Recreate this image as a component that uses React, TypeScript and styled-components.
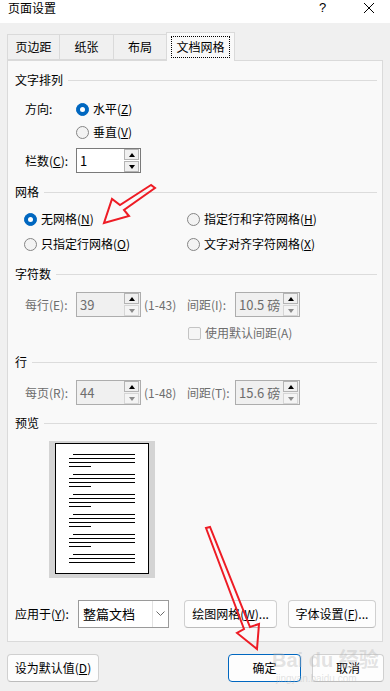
import React from "react";
import styled, { createGlobalStyle } from "styled-components";

const GlobalStyle = createGlobalStyle`
  html, body {
    margin: 0;
    padding: 0;
    background: #f0f0f0;
  }
  body {
    font-family: "Noto Sans CJK SC", "Noto Sans", "Liberation Sans", sans-serif;
    font-size: 12px;
    line-height: 16px;
    color: #000;
  }
  u {
    text-underline-offset: 1px;
  }
`;

const Window = styled.div`
  position: relative;
  width: 390px;
  height: 691px;
  background: #f0f0f0;
  overflow: hidden;
  display: flex;
  flex-direction: column;
`;

const TitleBar = styled.div`
  height: 23px;
  background: #fff;
  display: flex;
  align-items: flex-start;
  padding-left: 8px;
`;

const Title = styled.span`
  flex: 1;
  line-height: 15px;
`;

const Help = styled.span`
  width: 12px;
  margin-right: 32px;
  font-size: 13px;
  line-height: 15px;
  font-family: "Liberation Sans", sans-serif;
`;

const Close = styled.svg`
  margin: 2px 15px 0 0;
`;

const TabRow = styled.div`
  margin: 9px 0 0 7px;
  height: 28px;
  display: flex;
  align-items: flex-end;
  position: relative;
  z-index: 1;
`;

const Tab = styled.div<{ $w: number; $active?: boolean }>`
  box-sizing: border-box;
  width: ${(p) => p.$w}px;
  height: ${(p) => (p.$active ? 29 : 26)}px;
  margin-right: -1px;
  margin-bottom: ${(p) => (p.$active ? -1 : 0)}px;
  border: 1px solid #dadada;
  border-bottom: ${(p) => (p.$active ? "none" : "1px solid #dadada")};
  background: ${(p) => (p.$active ? "#f9f9f9" : "#f0f0f0")};
  display: flex;
  align-items: center;
  justify-content: center;
`;

const FocusText = styled.span`
  padding: 2px 4px;
  outline: 1px dotted #000;
  margin-top: -1px;
`;

const Panel = styled.div`
  box-sizing: border-box;
  margin: 0 7px;
  height: 582px;
  border: 1px solid #dadada;
  background: #f9f9f9;
  padding: 10px 5px 0 7px;
  display: flex;
  flex-direction: column;
`;

const Header = styled.div<{ $mt?: number }>`
  height: 18px;
  margin-top: ${(p) => p.$mt ?? 0}px;
  display: flex;
  align-items: center;
`;

const HeaderLine = styled.div`
  flex: 1;
  height: 1px;
  background: #dcdcdc;
  margin-left: 5px;
`;

const Row = styled.div<{ $mt: number; $h: number; $pl?: number }>`
  height: ${(p) => p.$h}px;
  margin-top: ${(p) => p.$mt}px;
  padding-left: ${(p) => p.$pl ?? 10}px;
  display: flex;
  align-items: center;
`;

const Label = styled.span<{ $w: number; $muted?: boolean }>`
  width: ${(p) => p.$w}px;
  flex: none;
  white-space: nowrap;
  color: ${(p) => (p.$muted ? "#6d6d6d" : "#000")};
`;

const Muted = styled.span`
  color: #6d6d6d;
  white-space: nowrap;
`;

const RadioItem = styled.label<{ $w?: number }>`
  display: flex;
  align-items: center;
  gap: 4px;
  width: ${(p) => (p.$w ? `${p.$w}px` : "auto")};
  flex: none;
  white-space: nowrap;
`;

const RadioCircle = styled.span<{ $checked?: boolean }>`
  box-sizing: border-box;
  width: 13px;
  height: 13px;
  flex: none;
  border-radius: 50%;
  border: 1px solid ${(p) => (p.$checked ? "#0067c0" : "#858585")};
  background: ${(p) => (p.$checked ? "#0067c0" : "#f3f3f3")};
  display: flex;
  align-items: center;
  justify-content: center;
  &::after {
    content: "";
    display: ${(p) => (p.$checked ? "block" : "none")};
    width: 5px;
    height: 5px;
    border-radius: 50%;
    background: #fff;
  }
`;

const CheckBox = styled.span`
  box-sizing: border-box;
  width: 13px;
  height: 13px;
  flex: none;
  border-radius: 2px;
  border: 1px solid #c4c4c4;
  background: #f5f5f5;
`;

const SpinBox = styled.div<{ $disabled?: boolean }>`
  box-sizing: border-box;
  width: 65px;
  height: 25px;
  flex: none;
  border: 1px solid ${(p) => (p.$disabled ? "#adadad" : "#7a7a7a")};
  background: ${(p) => (p.$disabled ? "#f0f0f0" : "#fff")};
  display: flex;
  align-items: stretch;
  padding: 0 1px 0 3px;
`;

const SpinValue = styled.span<{ $disabled?: boolean }>`
  flex: 1;
  display: flex;
  align-items: center;
  font-size: 13px;
  color: ${(p) => (p.$disabled ? "#6d6d6d" : "#000")};
`;

const SpinButtons = styled.div`
  width: 15px;
  display: flex;
  flex-direction: column;
  justify-content: center;
  gap: 1px;
`;

const SpinBtn = styled.div<{ $down?: boolean; $dim?: boolean }>`
  box-sizing: border-box;
  height: 11px;
  border: 1px solid ${(p) => (p.$dim ? "#d6d6d6" : "#b4b4b4")};
  background: ${(p) => (p.$dim ? "#f4f4f4" : "#f0f0f0")};
  display: flex;
  align-items: center;
  justify-content: center;
  &::after {
    content: "";
    width: 0;
    height: 0;
    border-left: 3.5px solid transparent;
    border-right: 3.5px solid transparent;
    ${(p) =>
      p.$down
        ? `border-top: 4px solid ${p.$dim ? "#8a8a8a" : "#000"};`
        : `border-bottom: 4px solid #000;`}
  }
`;

const Range = styled.span`
  width: 43px;
  margin-left: 3px;
  color: #6d6d6d;
  white-space: nowrap;
`;

const PreviewFrame = styled.div`
  box-sizing: border-box;
  margin: 9px 0 0 34px;
  width: 106px;
  height: 137px;
  background: #d4d4d4;
  padding: 2px 0 0 6px;
`;

const Page = styled.div`
  box-sizing: border-box;
  width: 94px;
  height: 131px;
  background: #fff;
  border: 1px solid #000;
  padding-top: 10px;
  display: flex;
  flex-direction: column;
  gap: 7px;
`;

const Para = styled.div`
  display: flex;
  flex-direction: column;
  gap: 3px;
`;

const TextLine = styled.div<{ $x: number; $w: number }>`
  height: 1px;
  margin-left: ${(p) => p.$x}px;
  width: ${(p) => p.$w}px;
  background: #000;
`;

const Select = styled.div`
  box-sizing: border-box;
  width: 91px;
  height: 28px;
  flex: none;
  border: 1px solid #9a9a9a;
  background: #fff;
  display: flex;
`;

const SelectText = styled.span`
  flex: 1;
  display: flex;
  align-items: center;
  padding-left: 4px;
  font-size: 13px;
`;

const SelectArrow = styled.span`
  width: 15px;
  border-left: 1px solid #e2e2e2;
  display: flex;
  align-items: center;
  justify-content: center;
`;

const Button = styled.div<{ $w: number; $ml?: number; $primary?: boolean }>`
  box-sizing: border-box;
  width: ${(p) => p.$w}px;
  height: 28px;
  margin-left: ${(p) => p.$ml ?? 0}px;
  flex: none;
  border-radius: 4px;
  border: 1px solid ${(p) => (p.$primary ? "#0067c0" : "#d0d0d0")};
  border-bottom-color: ${(p) => (p.$primary ? "#0067c0" : "#bcbcbc")};
  background: #fdfdfd;
  display: flex;
  align-items: center;
  justify-content: center;
  white-space: nowrap;
`;

const Footer = styled.div`
  margin-top: 12px;
  padding: 0 6px 0 7px;
  display: flex;
`;

const Spacer = styled.div`
  flex: 1;
`;

const Overlay = styled.svg`
  position: absolute;
  left: 0;
  top: 0;
  pointer-events: none;
`;

const Watermark = styled.div`
  position: absolute;
  left: 272px;
  top: 648px;
  color: rgba(185, 185, 185, 0.4);
  font-family: "Liberation Sans", "Noto Sans CJK SC", sans-serif;
  pointer-events: none;
  display: flex;
  flex-direction: column;
  white-space: nowrap;
`;

const WmTop = styled.span`
  font-size: 20px;
  line-height: 24px;
  font-weight: bold;
`;

const WmBottom = styled.span`
  font-size: 10px;
  line-height: 14px;
  margin-left: 4px;
`;

function Radio({ checked, children, w }: { checked?: boolean; children: React.ReactNode; w?: number }) {
  return (
    <RadioItem $w={w}>
      <RadioCircle $checked={checked} />
      <span>{children}</span>
    </RadioItem>
  );
}

function Spin({ value, disabled }: { value: string; disabled?: boolean }) {
  return (
    <SpinBox $disabled={disabled}>
      <SpinValue $disabled={disabled}>{value}</SpinValue>
      <SpinButtons>
        <SpinBtn />
        <SpinBtn $down $dim={disabled} />
      </SpinButtons>
    </SpinBox>
  );
}

function Section({ title, mt }: { title: string; mt?: number }) {
  return (
    <Header $mt={mt}>
      <span>{title}</span>
      <HeaderLine />
    </Header>
  );
}

export default function App() {
  const paras = [4, 4, 4, 4, 4, 3];
  return (
    <Window>
      <GlobalStyle />
      <TitleBar>
        <Title>页面设置</Title>
        <Help>?</Help>
        <Close width="12" height="12" viewBox="0 0 12 12">
          <path d="M1 1 L11 11 M11 1 L1 11" stroke="#000" strokeWidth="1" />
        </Close>
      </TitleBar>

      <TabRow>
        <Tab $w={53}>页边距</Tab>
        <Tab $w={55}>纸张</Tab>
        <Tab $w={54}>布局</Tab>
        <Tab $w={69} $active>
          <FocusText>文档网格</FocusText>
        </Tab>
      </TabRow>

      <Panel>
        <Section title="文字排列" />
        <Row $mt={9} $h={22}>
          <Label $w={51}>方向:</Label>
          <Radio checked>
            水平(<u>Z</u>)
          </Radio>
        </Row>
        <Row $mt={1} $h={22} $pl={61}>
          <Radio>
            垂直(<u>V</u>)
          </Radio>
        </Row>
        <Row $mt={5} $h={25}>
          <Label $w={51}>
            栏数(<u>C</u>):
          </Label>
          <Spin value="1" />
        </Row>

        <Section title="网格" mt={10} />
        <Row $mt={7} $h={22} $pl={9}>
          <Radio checked w={163}>
            无网格(<u>N</u>)
          </Radio>
          <Radio>
            指定行和字符网格(<u>H</u>)
          </Radio>
        </Row>
        <Row $mt={3} $h={22} $pl={9}>
          <Radio w={163}>
            只指定行网格(<u>O</u>)
          </Radio>
          <Radio>
            文字对齐字符网格(<u>X</u>)
          </Radio>
        </Row>

        <Section title="字符数" mt={10} />
        <Row $mt={9} $h={25}>
          <Label $w={51} $muted>
            每行(E):
          </Label>
          <Spin value="39" disabled />
          <Range>(1-43)</Range>
          <Label $w={48} $muted>
            间距(I):
          </Label>
          <Spin value="10.5 磅" disabled />
        </Row>
        <Row $mt={6} $h={20} $pl={173}>
          <RadioItem>
            <CheckBox />
            <Muted>使用默认间距(A)</Muted>
          </RadioItem>
        </Row>

        <Section title="行" mt={10} />
        <Row $mt={9} $h={25}>
          <Label $w={51} $muted>
            每页(R):
          </Label>
          <Spin value="44" disabled />
          <Range>(1-48)</Range>
          <Label $w={48} $muted>
            间距(T):
          </Label>
          <Spin value="15.6 磅" disabled />
        </Row>

        <Section title="预览" mt={9} />
        <PreviewFrame>
          <Page>
            {paras.map((n, i) => (
              <Para key={i}>
                <TextLine $x={17} $w={62} />
                <TextLine $x={13} $w={66} />
                <TextLine $x={13} $w={66} />
                {n === 4 && <TextLine $x={13} $w={22} />}
              </Para>
            ))}
          </Page>
        </PreviewFrame>

        <Row $mt={22} $h={28} $pl={0}>
          <Label $w={63}>
            应用于(<u>Y</u>):
          </Label>
          <Select>
            <SelectText>整篇文档</SelectText>
            <SelectArrow>
              <svg width="9" height="6" viewBox="0 0 9 6">
                <path d="M0.5 0.5 L4.5 4.5 L8.5 0.5" stroke="#6a6a6a" strokeWidth="1" fill="none" />
              </svg>
            </SelectArrow>
          </Select>
          <Button $w={93} $ml={15}>
            绘图网格(<u>W</u>)...
          </Button>
          <Button $w={88} $ml={11}>
            字体设置(<u>F</u>)...
          </Button>
        </Row>
      </Panel>

      <Footer>
        <Button $w={92}>
          设为默认值(<u>D</u>)
        </Button>
        <Spacer />
        <Button $w={73} $primary>
          确定
        </Button>
        <Button $w={72} $ml={11}>
          取消
        </Button>
      </Footer>

      <Watermark>
        <WmTop>Bai du 经验</WmTop>
        <WmBottom>jingyan.baidu.com</WmBottom>
      </Watermark>

      <Overlay width="390" height="691" viewBox="0 0 390 691">
        <polygon
          points="151,185 120,205 112,199 104,223 129,216 124,210 155,188"
          fill="none"
          stroke="#ee1c25"
          strokeWidth="2"
          strokeLinejoin="miter"
        />
        <polygon
          points="206,528 244,629 237,633 257,649 259,624 250,627 210,527"
          fill="none"
          stroke="#ee1c25"
          strokeWidth="2"
          strokeLinejoin="miter"
        />
      </Overlay>
    </Window>
  );
}
